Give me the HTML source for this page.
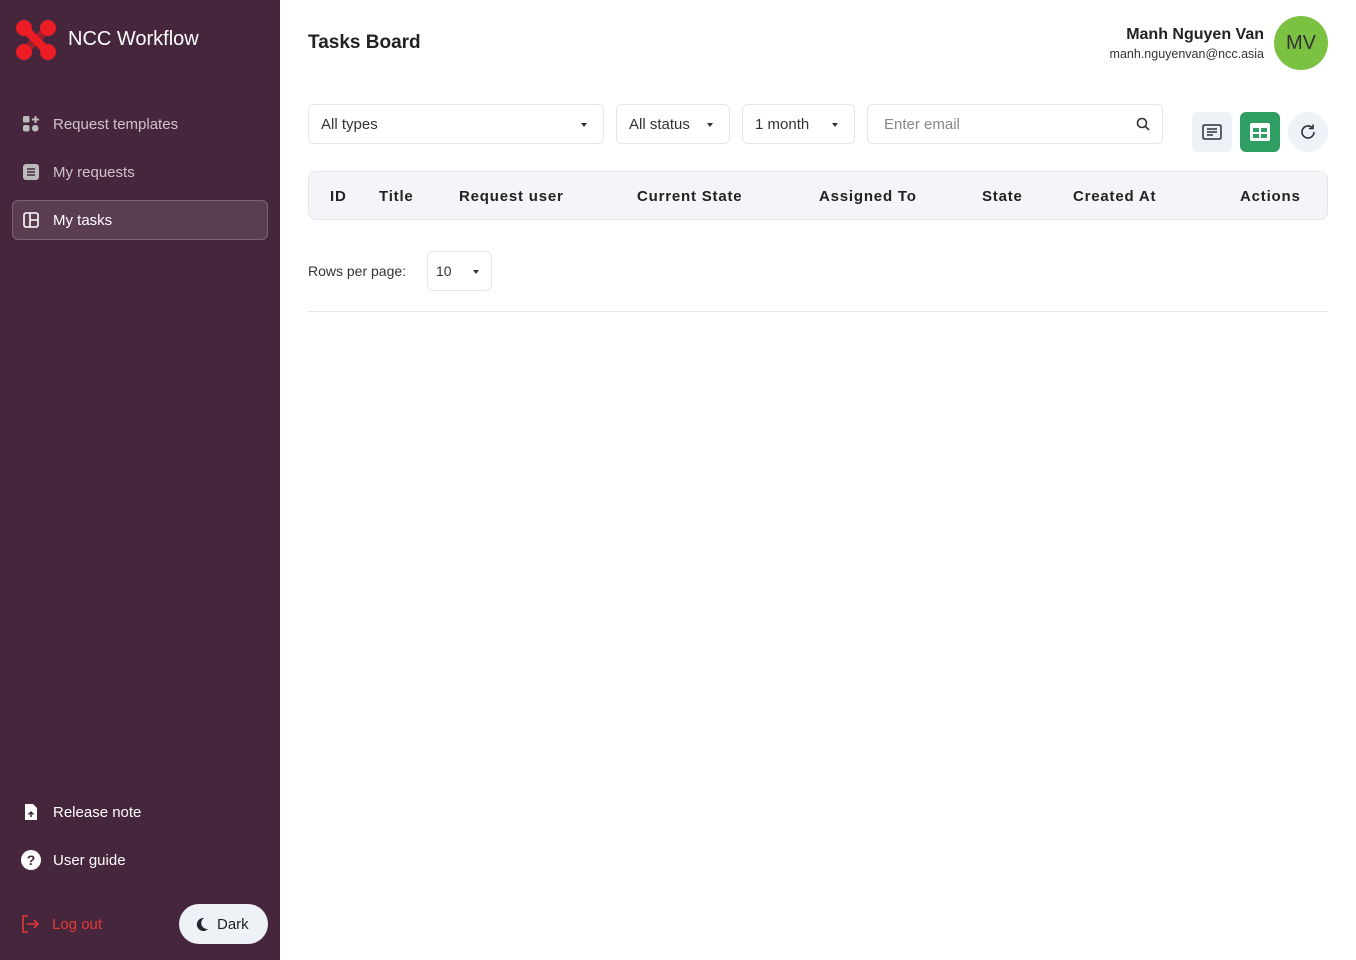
<!DOCTYPE html>
<html><head><meta charset="utf-8"><style>
*{box-sizing:border-box;margin:0;padding:0}
body{width:1356px;height:960px;font-family:"Liberation Sans",sans-serif;background:#fff;position:relative;overflow:hidden;color:#1e1e1e}
.sb{position:absolute;left:0;top:0;width:280px;height:960px;background:#46263c}
.t{position:absolute;white-space:nowrap}
.nav{position:absolute;left:12px;width:256px;height:40px;border-radius:6px;font-size:15px;color:#cfc3cb}
.nav svg{position:absolute;left:10px;top:11px}
.nav span{position:absolute;left:41px;top:12px}
.sel{position:absolute;top:104px;height:40px;border:1px solid #e3e6ea;border-radius:6px;font-size:15px;color:#333}
.sel span{position:absolute;left:12px;top:11px}
.car{position:absolute;top:18px;width:0;height:0;border-left:3.5px solid transparent;border-right:3.5px solid transparent;border-top:4px solid #333}
.th{position:absolute;top:188px;font-size:15px;font-weight:bold;letter-spacing:.8px;color:#222}
</style></head><body>
<div class="sb">
<svg style="position:absolute;left:15px;top:19px" width="42" height="42" viewBox="0 0 42 42"><g fill="#ec1c24"><circle cx="9" cy="9" r="8"/><circle cx="33" cy="9" r="8"/><circle cx="9" cy="33" r="8"/><circle cx="33" cy="33" r="8"/><path d="M12 6 L36 30 L30 36 L6 12Z"/><path d="M30 6 L36 12 L12 36 L6 30Z" opacity=".5"/></g></svg>
<div class="t" style="left:68px;top:28px;font-size:20px;color:#fff">NCC Workflow</div>
<div class="nav" style="top:104px"><svg width="18" height="18" viewBox="0 0 18 18" fill="#bbb"><rect x="1" y="1" width="6.5" height="6.5" rx="1.5"/><rect x="1" y="10" width="6.5" height="6.5" rx="2"/><rect x="10" y="10" width="6.5" height="6.5" rx="3"/><path d="M12.5 1h2v2.5H17v2h-2.5V8h-2V5.5H10v-2h2.5z"/></svg><span>Request templates</span></div>
<div class="nav" style="top:152px"><svg width="18" height="18" viewBox="0 0 18 18"><rect x="1" y="1" width="16" height="16" rx="3" fill="#bbb"/><path d="M5 6h8M5 9h8M5 12h8" stroke="#46263c" stroke-width="1.5"/></svg><span>My requests</span></div>
<div class="nav" style="top:200px;background:#5a3d50;border:1px solid #7a6270;color:#fff"><svg width="18" height="18" viewBox="0 0 18 18" fill="none" stroke="#fff" stroke-width="1.6" style="left:9px;top:10px"><rect x="2" y="2" width="14" height="14" rx="2"/><path d="M8 2v14M8 9h8"/></svg><span style="left:40px;top:11px">My tasks</span></div>
<div class="nav" style="top:792px;color:#fff"><svg width="18" height="18" viewBox="0 0 18 18"><path d="M3 1h8l4 4v12H3z" fill="#fff"/><path d="M9 14V9M6.5 11.5L9 9l2.5 2.5" stroke="#46263c" stroke-width="1.5" fill="none"/></svg><span>Release note</span></div>
<div class="nav" style="top:840px;color:#fff"><svg width="20" height="20" viewBox="0 0 20 20" style="left:9px;top:10px"><circle cx="10" cy="10" r="10" fill="#fff"/><text x="10" y="15" text-anchor="middle" font-size="14" font-weight="bold" fill="#46263c" font-family="Liberation Sans">?</text></svg><span>User guide</span></div>
<svg style="position:absolute;left:21px;top:915px" width="18" height="18" viewBox="0 0 18 18" fill="none" stroke="#e53935" stroke-width="1.6"><path d="M7 1H2v16h5M6 9h11M13 5l4 4-4 4"/></svg>
<div class="t" style="left:52px;top:916px;font-size:15px;color:#e53935">Log out</div>
<div style="position:absolute;left:179px;top:904px;width:89px;height:40px;border-radius:20px;background:#eef2f6">
<svg style="position:absolute;left:16px;top:13px" width="14" height="14" viewBox="0 0 14 14"><path d="M9 1a6.5 6.5 0 1 0 4 11A6 6 0 0 1 9 1z" fill="#1e2530"/></svg>
<div class="t" style="left:38px;top:12px;font-size:15px;color:#222">Dark</div></div>
</div>
<div class="t" style="left:308px;top:32px;font-size:19px;font-weight:bold;color:#222">Tasks Board</div>
<div class="t" style="right:92px;top:26px;font-size:16px;font-weight:bold;color:#222">Manh Nguyen Van</div>
<div class="t" style="right:92px;top:47px;font-size:12.5px;color:#333">manh.nguyenvan@ncc.asia</div>
<div style="position:absolute;left:1274px;top:16px;width:54px;height:54px;border-radius:50%;background:#7cc242;color:#333;font-size:20px;text-align:center;line-height:54px">MV</div>
<div class="sel" style="left:308px;width:296px"><span>All types</span><div class="car" style="left:272px"></div></div>
<div class="sel" style="left:616px;width:114px"><span>All status</span><div class="car" style="left:90px"></div></div>
<div class="sel" style="left:742px;width:113px"><span>1 month</span><div class="car" style="left:89px"></div></div>
<div class="sel" style="left:867px;width:296px"><span style="left:16px;color:#888">Enter email</span><svg style="position:absolute;left:268px;top:12px" width="14" height="14" viewBox="0 0 14 14" fill="none" stroke="#333" stroke-width="1.6"><circle cx="6" cy="6" r="4.5"/><path d="M9.5 9.5L13 13"/></svg></div>
<div style="position:absolute;left:1192px;top:112px;width:40px;height:40px;border-radius:6px;background:#eef2f6"><svg style="position:absolute;left:10px;top:12px" width="20" height="16" viewBox="0 0 20 16" fill="none" stroke="#2a2f3a" stroke-width="1.5"><rect x="1" y="1" width="18" height="14" rx="1.5"/><path d="M5 5h10M5 8h10M5 11h6"/></svg></div>
<div style="position:absolute;left:1240px;top:112px;width:40px;height:40px;border-radius:6px;background:#2f9e62"><svg style="position:absolute;left:10px;top:11px" width="20" height="18" viewBox="0 0 20 18"><rect x="0" y="0" width="20" height="18" rx="2" fill="#fff"/><g fill="#2f9e62"><rect x="3" y="5" width="6" height="4"/><rect x="11" y="5" width="6" height="4"/><rect x="3" y="11" width="6" height="4"/><rect x="11" y="11" width="6" height="4"/></g></svg></div>
<div style="position:absolute;left:1288px;top:112px;width:40px;height:40px;border-radius:50%;background:#eef2f6"><svg style="position:absolute;left:11px;top:11px" width="18" height="18" viewBox="0 0 18 18" fill="none" stroke="#2a2f3a" stroke-width="1.6"><path d="M15 9a6 6 0 1 1-2-4.5"/><path d="M14 1.5v4h-4"/></svg></div>
<div style="position:absolute;left:308px;top:171px;width:1020px;height:49px;border:1px solid #e3e6ea;border-radius:8px;background:#f3f5f8"></div>
<div class="th" style="left:330px">ID</div>
<div class="th" style="left:379px">Title</div>
<div class="th" style="left:459px">Request user</div>
<div class="th" style="left:637px">Current State</div>
<div class="th" style="left:819px">Assigned To</div>
<div class="th" style="left:982px">State</div>
<div class="th" style="left:1073px">Created At</div>
<div class="th" style="left:1240px">Actions</div>
<div class="t" style="left:308px;top:263px;font-size:14px;color:#333">Rows per page:</div>
<div class="sel" style="left:427px;top:251px;width:65px"><span style="left:8px;font-size:14px">10</span><div class="car" style="left:45px"></div></div>
<div style="position:absolute;left:308px;top:311px;width:1020px;height:1px;background:#e3e6ea"></div>
</body></html>
